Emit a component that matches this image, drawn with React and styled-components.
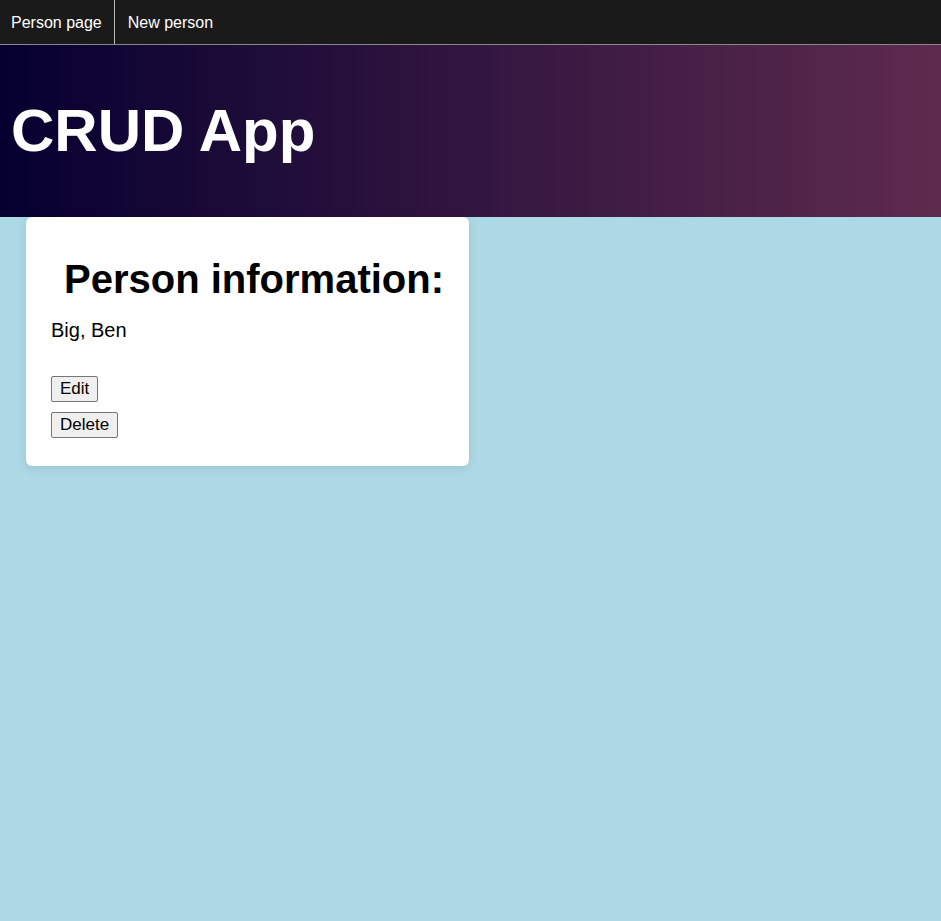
import React from "react";
import styled, { createGlobalStyle } from "styled-components";

const GlobalStyle = createGlobalStyle`
  * { box-sizing: border-box; }
  body {
    margin: 0;
    min-height: 100vh;
    background: lightblue;
    color: #000;
    font-family: "Liberation Sans", Arial, sans-serif;
    font-size: 20px;
  }
`;

const NavBar = styled.nav`
  display: flex;
  height: 45px;
  background: #1a1a1a;
  border-bottom: 1px solid #888;
`;

const NavLink = styled.a`
  display: flex;
  align-items: center;
  padding: 2px 12px 0 13px;
  color: #fff;
  font-size: 16px;
  text-decoration: none;

  &:first-child {
    padding-left: 11px;
    border-right: 1px solid #bbb;
  }
`;

const Banner = styled.header`
  display: flex;
  align-items: center;
  padding: 52px 11px;
  background: linear-gradient(to right, #050030, #5e2b4e);
`;

const AppTitle = styled.h1`
  margin: 0;
  color: #fff;
  font-size: 60px;
  line-height: 68px;
`;

const Card = styled.section`
  width: fit-content;
  margin-left: 26px;
  padding: 38px 25px 28px;
  background: #fff;
  border-radius: 6px;
  box-shadow: 0 2px 10px rgba(0, 0, 0, 0.1);
`;

const CardTitle = styled.h2`
  margin: 0 0 15px 13px;
  font-size: 40px;
  line-height: 48px;
`;

const PersonName = styled.p`
  margin: 0 0 34px;
  line-height: 24px;
`;

const Actions = styled.div`
  display: flex;
  flex-direction: column;
  align-items: flex-start;
  gap: 10px;
`;

const Button = styled.button`
  height: 26px;
  padding: 0 8px;
  border: 1px solid #767676;
  border-radius: 2px;
  background: #efefef;
  color: #000;
  font: 17px "Liberation Sans", Arial, sans-serif;
`;

export default function App() {
  return (
    <>
      <GlobalStyle />
      <NavBar>
        <NavLink href="#person">Person page</NavLink>
        <NavLink href="#new">New person</NavLink>
      </NavBar>
      <Banner>
        <AppTitle>CRUD App</AppTitle>
      </Banner>
      <main>
        <Card>
          <CardTitle>Person information:</CardTitle>
          <PersonName>Big, Ben</PersonName>
          <Actions>
            <Button type="button">Edit</Button>
            <Button type="button">Delete</Button>
          </Actions>
        </Card>
      </main>
    </>
  );
}
